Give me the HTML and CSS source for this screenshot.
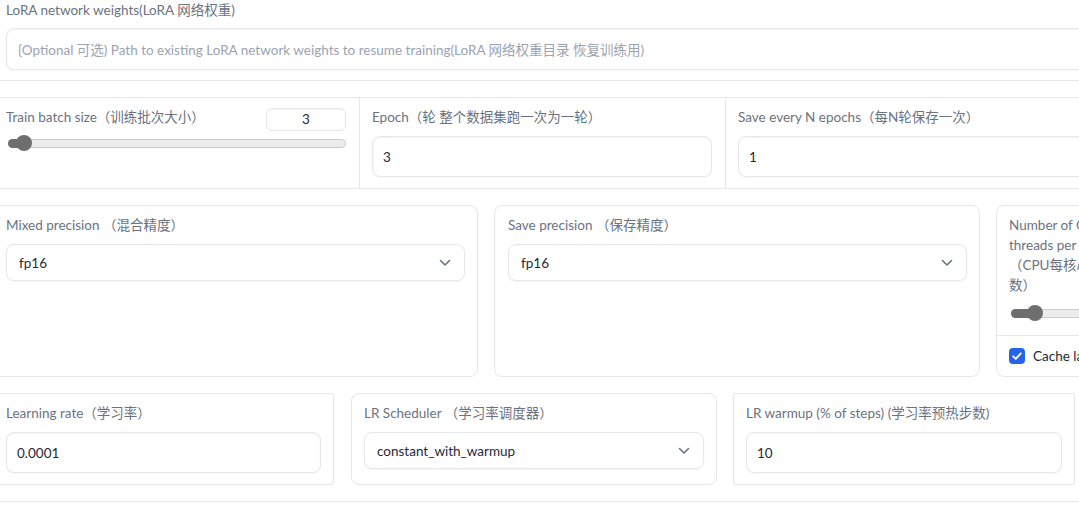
FILE: index.html
```html
<!DOCTYPE html>
<html>
<head>
<meta charset="utf-8">
<link rel="stylesheet" href="styles.css">
</head>
<body>
<div class="page">
  <div class="row1">
    <div class="label">LoRA network weights(LoRA 网络权重)</div>
    <div class="textbox wide"><span class="ph">{Optional 可选) Path to existing LoRA network weights to resume training(LoRA 网络权重目录 恢复训练用)</span></div>
  </div>

  <div class="row2">
    <div class="col">
      <div class="label-line">
        <span class="label">Train batch size（训练批次大小）</span>
        <div class="numbox">3</div>
      </div>
      <div class="slider"><div class="fill" style="width:15px"></div><div class="thumb" style="left:15px"></div></div>
    </div>
    <div class="col">
      <div class="label">Epoch（轮 整个数据集跑一次为一轮）</div>
      <div class="textbox"><span class="val">3</span></div>
    </div>
    <div class="col">
      <div class="label">Save every N epochs（每N轮保存一次）</div>
      <div class="textbox"><span class="val">1</span></div>
    </div>
  </div>

  <div class="row3">
    <div class="box b486">
      <div class="inner">
        <div class="label">Mixed precision （混合精度）</div>
        <div class="dropdown"><span class="val">fp16</span><svg class="chev" viewBox="0 0 12 8" width="12" height="8"><path d="M1.5 1.5 L6 6 L10.5 1.5" fill="none" stroke="#6b7280" stroke-width="1.6" stroke-linecap="round" stroke-linejoin="round"/></svg></div>
      </div>
    </div>
    <div class="box b486">
      <div class="inner">
        <div class="label">Save precision （保存精度）</div>
        <div class="dropdown"><span class="val">fp16</span><svg class="chev" viewBox="0 0 12 8" width="12" height="8"><path d="M1.5 1.5 L6 6 L10.5 1.5" fill="none" stroke="#6b7280" stroke-width="1.6" stroke-linecap="round" stroke-linejoin="round"/></svg></div>
      </div>
    </div>
    <div class="box narrow">
      <div class="inner grow">
        <div class="label wrap">Number of CPU threads per core （CPU每核心线程数）</div>
        <div class="slider small"><div class="fill" style="width:23px"></div><div class="thumb" style="left:23px"></div></div>
      </div>
      <div class="checkrow">
        <span class="checkbox"><svg viewBox="0 0 16 16" width="16" height="16"><path d="M4.2 8.3 L6.8 10.8 L11.8 5.4" fill="none" stroke="#fff" stroke-width="1.8" stroke-linecap="round" stroke-linejoin="round"/></svg></span>
        <span class="checklabel">Cache latents</span>
      </div>
    </div>
  </div>

  <div class="row4">
    <div class="box w342 flat-left">
      <div class="inner">
        <div class="label">Learning rate（学习率）</div>
        <div class="textbox"><span class="val">0.0001</span></div>
      </div>
    </div>
    <div class="box w366">
      <div class="inner">
        <div class="label">LR Scheduler （学习率调度器）</div>
        <div class="dropdown"><span class="val">constant_with_warmup</span><svg class="chev" viewBox="0 0 12 8" width="12" height="8"><path d="M1.5 1.5 L6 6 L10.5 1.5" fill="none" stroke="#6b7280" stroke-width="1.6" stroke-linecap="round" stroke-linejoin="round"/></svg></div>
      </div>
    </div>
    <div class="box w342 last">
      <div class="inner">
        <div class="label">LR warmup (% of steps) (学习率预热步数)</div>
        <div class="textbox"><span class="val">10</span></div>
      </div>
    </div>
  </div>

  <div class="row5"></div>
</div>
</body>
</html>
```

FILE: styles.css
```css
html, body {
  margin: 0;
  padding: 0;
  background: #ffffff;
  overflow: hidden;
}
body {
  font-family: Lato, "Noto Sans CJK SC", sans-serif;
  font-size: 13.5px;
  color: #374151;
}
.page {
  margin-left: -8px;
  width: 1160px;
}
.label {
  color: #6b7280;
  font-size: 13.5px;
  line-height: 20px;
  white-space: nowrap;
}
.label.wrap {
  white-space: normal;
}
.val {
  color: #1f2937;
  font-size: 13.5px;
}
.ph {
  color: #9ca3af;
  font-size: 13.5px;
  white-space: nowrap;
}

/* row 1 */
.row1 {
  padding: 0 0 10px 14px;
  border-bottom: 1px solid #e5e7eb;
}
.row1 .textbox {
  margin-top: 8px;
  height: 42px;
  padding-left: 11px;
}
.textbox {
  box-sizing: border-box;
  height: 41px;
  border: 1px solid #e5e7eb;
  border-radius: 8px;
  box-shadow: inset 0 1px 2px rgba(0,0,0,0.05), 0 1px 2px rgba(0,0,0,0.04);
  background: #fff;
  display: flex;
  align-items: center;
  padding-left: 10px;
}

/* row 2 */
.row2 {
  margin-top: 16px;
  display: flex;
  border-top: 1px solid #e5e7eb;
  border-bottom: 1px solid #e5e7eb;
}
.row2 .col {
  box-sizing: border-box;
  width: 366px;
  padding: 9px 13px 11px 12px;
  border-right: 1px solid #e5e7eb;
  display: flex;
  flex-direction: column;
  gap: 9px;
}
.row2 .col:nth-child(3) {
  border-right: none;
  flex: 1;
}
.row2 .col:first-child {
  width: 368px;
  padding-left: 14px;
}
.label-line {
  display: flex;
  justify-content: space-between;
  align-items: flex-start;
  height: 20px;
}
.numbox {
  box-sizing: border-box;
  width: 80px;
  height: 23px;
  margin-top: 1px;
  border: 1px solid #e5e7eb;
  border-radius: 6px;
  text-align: center;
  line-height: 21px;
  color: #1f2937;
  box-shadow: inset 0 1px 2px rgba(0,0,0,0.04);
}
.slider {
  position: relative;
  margin-top: 3px;
  margin-left: 2px;
  height: 9px;
  box-sizing: border-box;
  border: 1px solid #c9cbd0;
  border-radius: 5px;
  background: #ececec;
}
.slider .fill {
  position: absolute;
  left: -1px;
  top: -1px;
  height: 9px;
  border-radius: 5px 0 0 5px;
  background: #6e6e6e;
}
.slider .thumb {
  position: absolute;
  top: -5px;
  width: 16px;
  height: 16px;
  margin-left: -8px;
  border-radius: 50%;
  background: #6e6e6e;
}

/* boxes */
.box {
  box-sizing: border-box;
  border: 1px solid #e5e7eb;
  border-radius: 8px;
  background: #fff;
  display: flex;
  flex-direction: column;
}
.inner {
  padding: 9px 12px 10px 12px;
  display: flex;
  flex-direction: column;
  gap: 9px;
}
.inner.grow {
  flex: 1;
}
.row3 {
  margin-top: 16px;
  display: flex;
  gap: 16px;
  align-items: stretch;
  height: 172px;
}
.b486 {
  width: 486px;
}
.b486 .inner {
  padding-left: 13px;
}
.narrow {
  width: 150px;
}
.narrow .label {
  width: 112px;
}
.slider.small {
  margin-top: 5px;
  margin-left: 2px;
}
.checkrow {
  border-top: 1px solid #e5e7eb;
  height: 40px;
  display: flex;
  align-items: center;
  padding-left: 12px;
  gap: 8px;
}
.checkbox {
  width: 16px;
  height: 16px;
  border-radius: 4px;
  background: #2563eb;
  display: block;
}
.checkbox svg {
  display: block;
}
.checklabel {
  color: #1f2937;
  white-space: nowrap;
}
.dropdown {
  box-sizing: border-box;
  height: 37px;
  border: 1px solid #e5e7eb;
  border-radius: 8px;
  box-shadow: 0 1px 2px rgba(0,0,0,0.05);
  display: flex;
  align-items: center;
  justify-content: space-between;
  padding: 0 13px 0 12px;
}
.chev {
  display: block;
}

/* row 4 */
.row4 {
  margin-top: 16px;
  display: flex;
  gap: 17px;
  height: 92px;
}
.w342 { width: 342px; }
.w366 { width: 366px; }
.flat-left {
  border-left: none;
  border-radius: 0 4px 4px 0;
}
.flat-left .inner {
  padding-left: 14px;
}
.row4 .box.last {
  border-radius: 2px;
  margin-left: -1px;
}
.row5 {
  margin-top: 16px;
  border-top: 1px solid #e5e7eb;
  height: 10px;
}
```
